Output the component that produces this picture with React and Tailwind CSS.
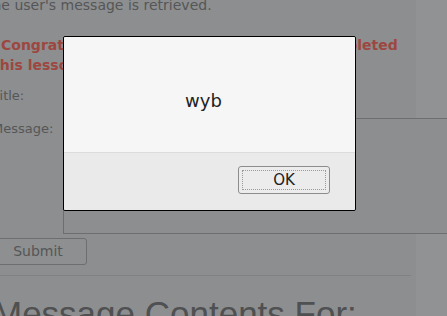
export default function App() {
  return (
    <div className="relative flex h-[316px] w-[447px] overflow-hidden bg-[#8d8e8f] font-['DejaVu_Sans',sans-serif] text-[#555657]">
      <main className="w-[416px] shrink-0">
        <div className="ml-[-8px] w-[419px]">
          <p className="ml-[-5px] mt-[-5px] text-[14px] leading-[20px] whitespace-nowrap">
            the user's message is retrieved.
          </p>
          <p className="ml-[1px] mt-[20px] w-[418px] indent-[8px] text-[14px] font-bold leading-[20px] text-[#9d4741]">
            Congratulations. You have successfully completed this lesson.
          </p>

          <form className="mt-[8px] flex flex-col">
            <div className="flex items-start">
              <label className="w-[71px] shrink-0 pt-[3.5px] text-[13px] leading-[18px]">Title:</label>
              <input
                readOnly
                className="h-[25px] w-[200px] border border-[#6d6e6f] bg-[#8d8e8f]"
              />
            </div>
            <div className="mt-[10px] flex items-start">
              <label className="w-[71px] shrink-0 pt-[2px] text-[13px] leading-[18px]">Message:</label>
              <textarea
                readOnly
                className="relative z-10 h-[116px] w-[420px] shrink-0 resize-none border border-[#6d6e6f] bg-[#8d8e8f]"
              />
            </div>
            <div className="mt-[4px]">
              <button
                type="button"
                className="ml-[-3px] h-[27px] w-[98px] rounded-[3px] border border-[#6d6e6f] bg-[#8e8f90] text-[14px] text-[#555657]"
              >
                Submit
              </button>
            </div>
          </form>

          <hr className="mt-[10px] ml-[8px] w-[411px] border-t border-[#808182]" />
          <h2 className="ml-[1px] mt-[18px] whitespace-nowrap font-['Liberation_Sans',Arial,sans-serif] text-[35px] leading-[40px] text-[#4f5051]">
            Message Contents For:
          </h2>
        </div>
      </main>
      <aside className="flex-1 bg-[#919293]" />

      <div className="absolute left-[63px] top-[36px] z-20 flex h-[175px] w-[293px] flex-col overflow-hidden rounded-[2px] border border-black">
        <div className="h-[115px] bg-[#f6f6f6] pt-[53px] pr-[12px] text-center text-[18px] leading-[21px] text-[#222]">
          wyb
        </div>
        <div className="flex flex-1 items-start justify-end border-t border-[#dcdcdc] bg-[#eaeaea] pt-[13px] pr-[25px]">
          <button
            type="button"
            className="flex h-[28px] w-[92px] rounded-[3px] border border-[#8c8c8c] bg-[#ececec] p-[3px]"
          >
            <span className="flex flex-1 items-center justify-center border border-dotted border-[#9a9a9a] text-[15px] leading-none text-[#222]">
              OK
            </span>
          </button>
        </div>
      </div>
    </div>
  );
}
